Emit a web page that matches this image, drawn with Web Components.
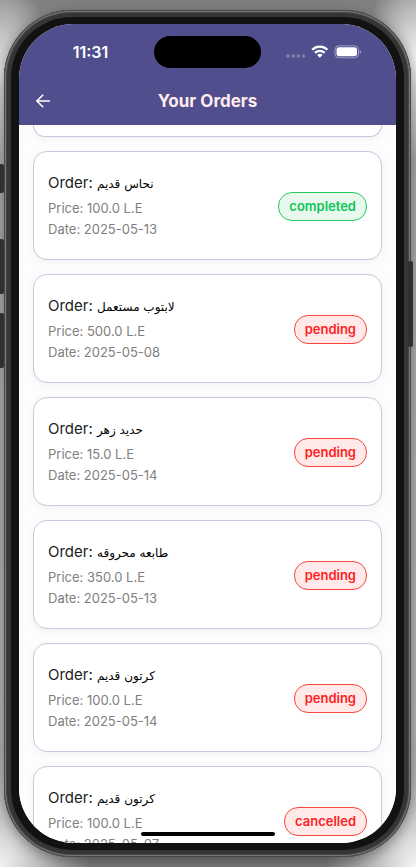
<!DOCTYPE html>
<html lang="en">
<head>
<meta charset="utf-8">
<meta name="viewport" content="width=device-width, initial-scale=1">
<title>Your Orders</title>
<style>
html, body { height: 100%; margin: 0; }
body {
  font-family: Inter, "DejaVu Sans", sans-serif;
  background:
    radial-gradient(ellipse 50px 100px at 0 70px, #e4e4e4, transparent),
    radial-gradient(ellipse 50px 100px at 100% 60px, #f4f4f4, transparent),
    radial-gradient(ellipse 90px 120px at 0 100%, #f2f2f2, transparent),
    radial-gradient(ellipse 90px 120px at 100% 100%, #f6f6f6, transparent),
    linear-gradient(#808080 0, #a8a8a8 15%, #b0b0b0 50%, #b8b8b8 85%, #7c7c7c 100%);
  overflow: hidden;
}
</style>
</head>
<body>
<phone-frame>
  <status-bar time="11:31"></status-bar>
  <app-bar heading="Your Orders"></app-bar>
  <order-list>
    <card-tail></card-tail>
    <order-card price="100.0" date="2025-05-13" status="completed">نحاس قديم</order-card>
    <order-card price="500.0" date="2025-05-08" status="pending">لابتوب مستعمل</order-card>
    <order-card price="15.0" date="2025-05-14" status="pending">حديد زهر</order-card>
    <order-card price="350.0" date="2025-05-13" status="pending">طابعه محروقه</order-card>
    <order-card price="100.0" date="2025-05-14" status="pending">كرتون قديم</order-card>
    <order-card price="100.0" date="2025-05-07" status="cancelled">كرتون قديم</order-card>
  </order-list>
</phone-frame>
<script>
class BaseElement extends HTMLElement {
  connectedCallback() {
    if (!this.shadowRoot) this.attachShadow({ mode: 'open' }).innerHTML = this.render();
  }
}

customElements.define('status-badge', class extends BaseElement {
  render() {
    return `<style>
      :host { display: block; --ink: #ff1e1e; --line: #f9453c; --fill: #ffe9e9;
        box-sizing: border-box; padding: 6px 10px; border: 1px solid var(--line);
        border-radius: 14px; background: var(--fill); color: var(--ink);
        font-size: 13px; font-weight: 600; line-height: 15px; }
      :host([kind="completed"]) { --ink: #0ec45c; --line: #22c960; --fill: #e8f8ec; }
    </style><slot></slot>`;
  }
});

customElements.define('order-card', class extends BaseElement {
  render() {
    const a = n => this.getAttribute(n);
    return `<style>
      :host { display: block; flex: none; }
      article { box-sizing: border-box; display: flex; align-items: center; justify-content: space-between;
        padding: 20px 14px 19px; border: 1px solid #c8c8e0; border-radius: 14px; background: #fff;
        box-shadow: 0 2px 8px rgba(0, 0, 0, .05); }
      h2 { margin: 0 0 4px; font-size: 15px; font-weight: 400; line-height: 22px; color: #1c1c1c; }
      bdi { font-family: "DejaVu Sans", sans-serif; font-size: 12px; line-height: 16px; color: #000; }
      p { margin: 0; font-size: 13px; line-height: 21px; color: #808080; }
    </style>
    <article>
      <div>
        <h2>Order: <bdi lang="ar"><slot></slot></bdi></h2>
        <p>Price: ${a('price')} L.E</p>
        <p>Date: ${a('date')}</p>
      </div>
      <status-badge kind="${a('status')}">${a('status')}</status-badge>
    </article>`;
  }
});

/* Bottom edge of the card that has scrolled under the app bar. */
customElements.define('card-tail', class extends BaseElement {
  render() {
    return `<style>
      :host { display: block; flex: none; box-sizing: border-box; height: 12px; border: 1px solid #c8c8e0; border-top: 0;
        border-radius: 0 0 14px 14px; background: #fff; box-shadow: 0 2px 8px rgba(0, 0, 0, .05); }
    </style>`;
  }
});

customElements.define('order-list', class extends BaseElement {
  render() {
    return `<style>
      :host { display: flex; flex-direction: column; gap: 14px; flex: 1; min-height: 0;
        padding: 0 14px; overflow-y: auto; scrollbar-width: none; background: #fdfdfe; }
    </style><slot></slot>`;
  }
});

customElements.define('app-bar', class extends BaseElement {
  render() {
    return `<style>
      :host { display: block; background: #504e8d; }
      header { display: grid; grid-template-columns: 48px 1fr 48px; align-items: center; height: 48px; }
      button { display: grid; place-items: center; width: 48px; height: 48px; padding: 0; border: 0; background: none; color: #fff; }
      h1 { margin: 0; text-align: center; font-size: 17px; line-height: 24px; font-weight: 700; color: #ffebee; }
    </style>
    <header>
      <button type="button" aria-label="Back">
        <svg width="14" height="14" viewBox="0 0 14 14" fill="none" stroke="currentColor" stroke-width="1.6"><path d="M14 7H1M7.200.700L.900 7l6.300 6.300"/></svg>
      </button>
      <h1>${this.getAttribute('heading')}</h1>
    </header>`;
  }
});

customElements.define('status-bar', class extends BaseElement {
  render() {
    return `<style>
      :host { display: grid; grid-template-columns: 1fr 107px 1fr; align-items: center;
        padding: 12px 0 9px; background: #504e8d; color: #fff; }
      time { justify-self: center; padding-left: 8px; font-size: 16px; font-weight: 600; line-height: 20px; }
      .island { height: 32px; border-radius: 16px; background: #000; }
      svg { justify-self: center; margin-right: 10px; }
    </style>
    <time>${this.getAttribute('time')}</time>
    <div class="island"></div>
    <svg width="76" height="16" viewBox="0 0 76 16" fill="#fff" role="img" aria-label="Wi-Fi and battery">
      <g opacity=".3"><circle cx="2" cy="12" r="1.700"/><circle cx="7.200" cy="12" r="1.700"/><circle cx="12.400" cy="12" r="1.700"/><circle cx="17.600" cy="12" r="1.700"/></g>
      <g fill="none" stroke="#fff" stroke-width="2.300"><path d="M26.200 5.800a10.800 10.800 0 0 1 15.200 0"/><path d="M29 8.900a6.800 6.800 0 0 1 9.600 0"/></g>
      <path d="M33.800 13.800l-2.700-2.800a3.900 3.900 0 0 1 5.400 0z"/>
      <rect x="49" y="1.800" width="23.500" height="12" rx="4" fill="none" stroke="#fff" stroke-opacity=".45"/>
      <rect x="50.500" y="3.300" width="20.500" height="9" rx="2.700"/>
      <path d="M73.700 5.900v3.800a2 2 0 0 0 0-3.800z" opacity=".5"/>
    </svg>`;
  }
});

customElements.define('phone-frame', class extends BaseElement {
  render() {
    return `<style>
      :host { display: block; box-sizing: border-box; height: 100%; padding: 10px 5px 10px 4px; }
      .body { position: relative; box-sizing: border-box; height: 100%; padding: 14px 15px;
        border-radius: 68px; background: #121212;
        box-shadow: inset 0 0 0 1px #494949, inset 0 0 0 2px #777, inset 0 0 0 3px #454545, inset 0 0 0 7px #353535, 0 4px 14px rgba(0, 0, 0, .4); }
      .screen { display: flex; flex-direction: column; height: 100%; border-radius: 55px; overflow: hidden; background: #fff; }
      .key { position: absolute; width: 5px; border-radius: 2px; background: #303030; }
      .left { right: 100%; }
      .right { left: 100%; margin-left: -3px; }
      .mute { top: 154px; height: 29px; }
      .up { top: 229px; height: 55px; }
      .down { top: 303px; height: 55px; }
      .power { top: 251px; height: 86px; }
      .home { position: absolute; bottom: 21px; left: 50%; width: 134px; height: 4px; margin-left: -67px; border-radius: 2px; background: #000; }
    </style>
    <div class="body">
      <div class="screen"><slot></slot></div>
      <span class="key left mute"></span><span class="key left up"></span>
      <span class="key left down"></span><span class="key right power"></span>
      <span class="home"></span>
    </div>`;
  }
});
</script>
</body>
</html>
